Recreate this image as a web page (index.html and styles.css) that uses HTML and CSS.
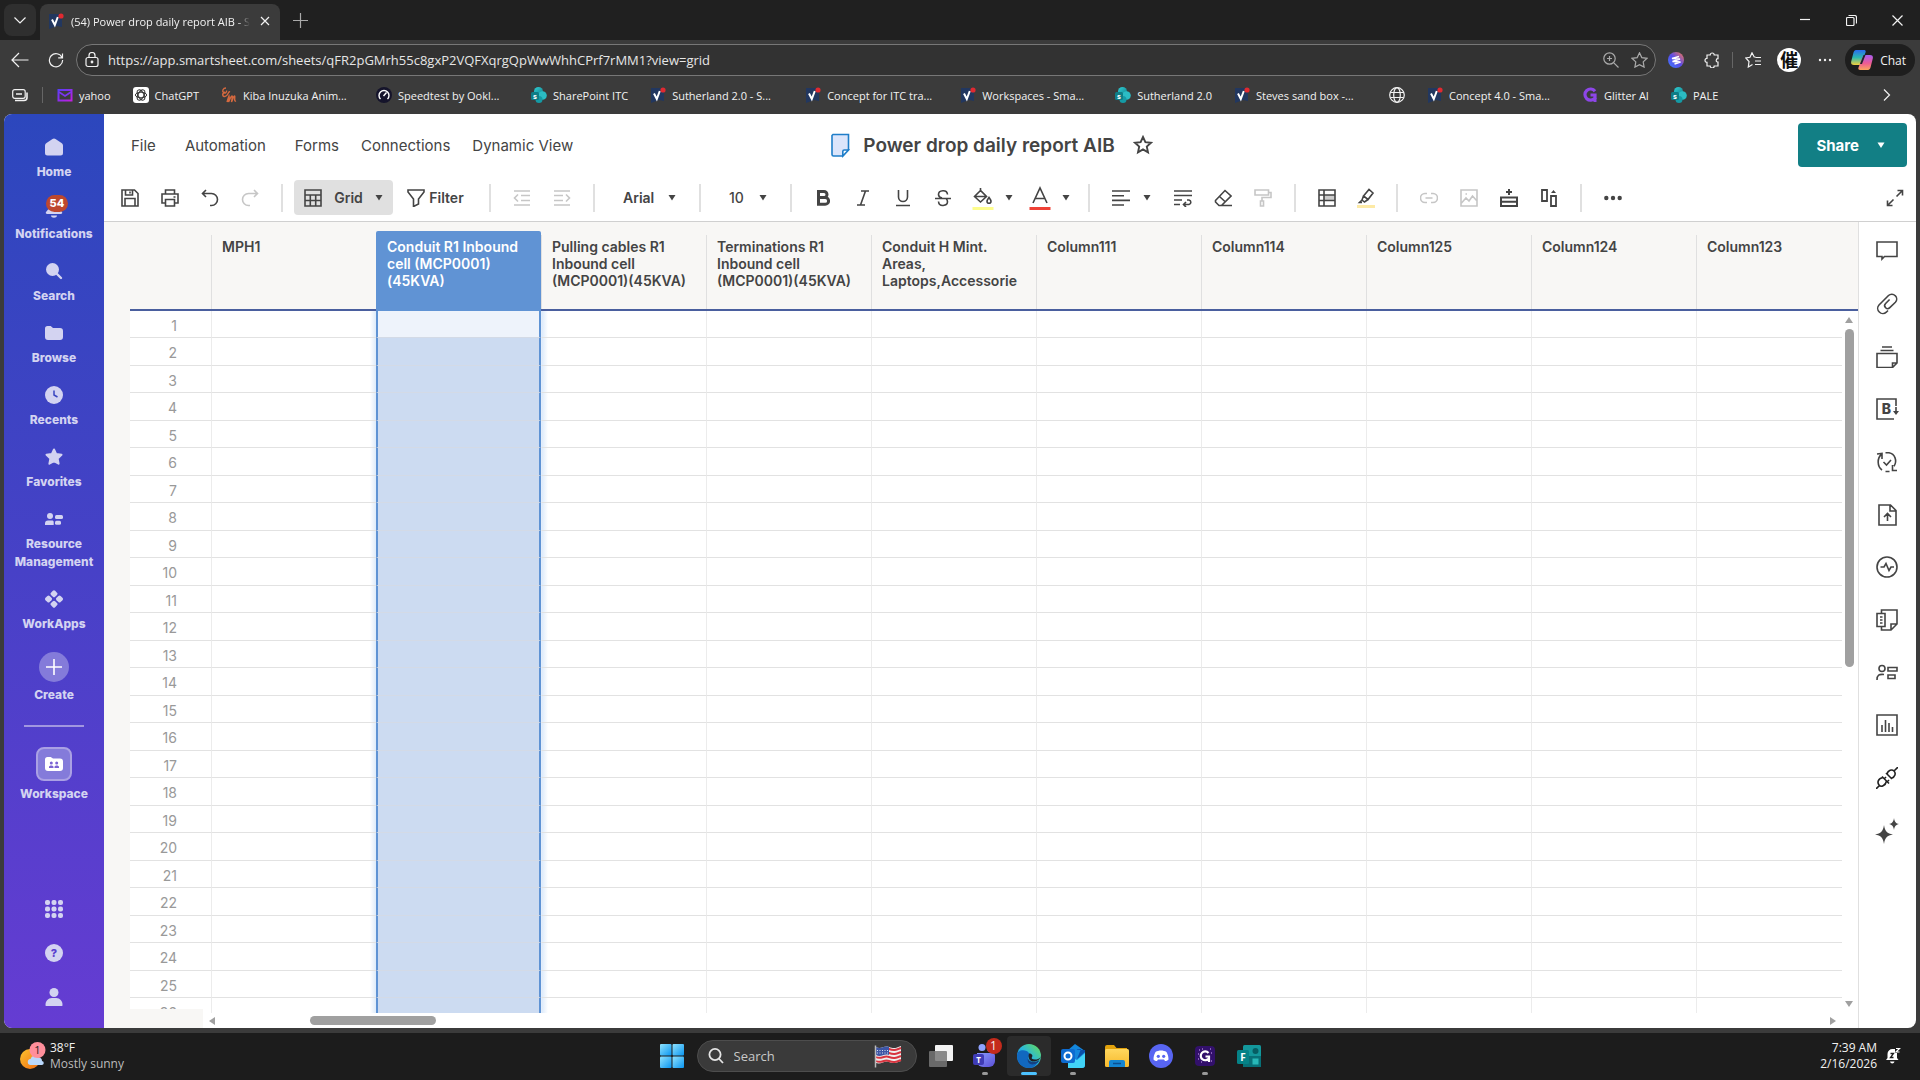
FILE: index.html
```html
<!DOCTYPE html>
<html lang="en">
<head>
  <meta charset="UTF-8">
  <meta name="viewport" content="width=device-width, initial-scale=1.0">
  <title>Power drop daily report AIB</title>
  <link rel="stylesheet" href="styles.css">
</head>
<body>
  <!-- Shared icons -->
  <svg class="defs" width="0" height="0" aria-hidden="true">
    <defs>
      <linearGradient id="g-sp" x1="0" y1="0" x2="1" y2="1"><stop offset="0" stop-color="#2fd0d6"/><stop offset="1" stop-color="#117f8c"/></linearGradient>
      <linearGradient id="g-yahoo" x1="0" y1="0" x2="1" y2="1"><stop offset="0" stop-color="#5a3df5"/><stop offset="1" stop-color="#c01fe0"/></linearGradient>
      <linearGradient id="g-win" x1="0" y1="0" x2="1" y2="1"><stop offset="0" stop-color="#8fe3ff"/><stop offset="1" stop-color="#0a95f0"/></linearGradient>
      <linearGradient id="g-edge" x1="0" y1="1" x2="1" y2="0"><stop offset="0" stop-color="#1273c9"/><stop offset=".5" stop-color="#28b7dd"/><stop offset="1" stop-color="#6be04e"/></linearGradient>
      <linearGradient id="g-cop1" x1="0" y1="0" x2="0" y2="1"><stop offset="0" stop-color="#2a6bf0"/><stop offset=".5" stop-color="#2bb8b0"/><stop offset="1" stop-color="#f5d03c"/></linearGradient>
      <linearGradient id="g-cop2" x1="0" y1="0" x2="0" y2="1"><stop offset="0" stop-color="#a95df2"/><stop offset=".55" stop-color="#ee5a94"/><stop offset="1" stop-color="#fba45c"/></linearGradient>
      <linearGradient id="g-ext" x1="1" y1="0" x2="0" y2="1"><stop offset="0" stop-color="#ff7a4d"/><stop offset=".5" stop-color="#5a4be8"/><stop offset="1" stop-color="#3f7bff"/></linearGradient>
      <linearGradient id="g-sun" x1="0" y1="0" x2="1" y2="1"><stop offset="0" stop-color="#fcc42f"/><stop offset="1" stop-color="#ef6a12"/></linearGradient>
      <linearGradient id="g-teams" x1="0" y1="0" x2="1" y2="1"><stop offset="0" stop-color="#8b9bff"/><stop offset="1" stop-color="#5a4fd6"/></linearGradient>
      <linearGradient id="g-folder" x1="0" y1="0" x2="0" y2="1"><stop offset="0" stop-color="#ffd75e"/><stop offset="1" stop-color="#f7b92c"/></linearGradient>
    </defs>
    <symbol id="i-smart" viewBox="0 0 16 16">
      <path d="M1 1h13v13l-5-1-8 3z" fill="#22375f"/>
      <path d="M4 6.500 6.800 12l3-8" fill="none" stroke="#fff" stroke-width="2"/>
      <circle cx="13" cy="3" r="2.600" fill="#e02a30"/>
    </symbol>
    <symbol id="i-share" viewBox="0 0 16 16">
      <circle cx="7.500" cy="4.500" r="4.500" fill="url(#g-sp)"/>
      <circle cx="11.500" cy="8.500" r="4.300" fill="#2bbcc4"/>
      <circle cx="8" cy="12.500" r="3.500" fill="#159aa5"/>
      <rect y="5" width="8" height="8" rx="1.500" fill="#0f7d86"/>
      <text x="4" y="11.500" font-family="Inter, sans-serif" font-size="7" font-weight="700" fill="#fff" text-anchor="middle">s</text>
    </symbol>
    <symbol id="i-caret" viewBox="0 0 8 6"><path d="M.5 0h7L4 5.600z" fill="currentColor"/></symbol>
  </svg>

  <!-- Browser window -->
  <div class="tab-strip">
    <button class="tab-menu" aria-label="Tab actions"><svg width="14" height="14" viewBox="0 0 14 14" class="line"><path d="M1.500 4.500 7 10l5.500-5.500"/></svg></button>
    <div class="tab">
      <svg width="16" height="16"><use href="#i-smart"/></svg>
      <span class="tab-title">(54) Power drop daily report AIB - S</span>
      <button class="tab-close" aria-label="Close tab"><svg width="10" height="10" viewBox="0 0 10 10" class="line"><path d="M1 1l8 8M9 1 1 9"/></svg></button>
    </div>
    <button class="tab-new" aria-label="New tab"><svg width="15" height="15" viewBox="0 0 15 15" class="line"><path d="M7.500 0v15M0 7.500h15"/></svg></button>
    <div class="window-controls">
      <button aria-label="Minimize"><svg width="10" height="10" viewBox="0 0 10 10" class="line"><path d="M0 4.500h10"/></svg></button>
      <button aria-label="Restore"><svg width="11" height="11" viewBox="0 0 11 11" class="line"><rect x=".5" y="2.500" width="7.500" height="8" rx="1"/><path d="M2.500.5h6a2 2 0 0 1 2 2v6"/></svg></button>
      <button aria-label="Close"><svg width="11" height="11" viewBox="0 0 11 11" class="line"><path d="M.5.5l10 10M10.500.5l-10 10"/></svg></button>
    </div>
  </div>

  <div class="nav-bar">
    <button class="nav-btn" aria-label="Back"><svg width="18" height="16" viewBox="0 0 18 16" class="line"><path d="M17.500 8H1M8 1 1 8l7 7"/></svg></button>
    <button class="nav-btn" aria-label="Refresh"><svg width="16" height="16" viewBox="0 0 16 16" class="line"><path d="M14 5.500A6.600 6.600 0 1 0 14.600 8M14.500 1.500v4.300h-4.300"/></svg></button>
    <div class="address">
      <svg width="14" height="16" viewBox="0 0 14 16" class="line"><rect x="1" y="5.500" width="12" height="9" rx="2"/><path d="M4 5.500V3.500a3 3 0 0 1 6 0v2"/><circle cx="7" cy="10" r=".8" fill="currentColor"/></svg>
      <input type="text" aria-label="Address" value="https://app.smartsheet.com/sheets/qFR2pGMrh55c8gxP2VQFXqrgQpWwWhhCPrf7rMM1?view=grid">
      <button aria-label="Zoom"><svg width="16" height="16" viewBox="0 0 16 16" class="line"><circle cx="6.500" cy="6.500" r="5.700"/><path d="M10.800 10.800 15.500 15.500M6.500 4v5M4 6.500h5"/></svg></button>
      <button aria-label="Add to favorites"><svg width="17" height="16" viewBox="0 0 17 16" class="line"><path d="M8.500.8l2.300 4.800 5.200.7-3.800 3.600.9 5.200-4.600-2.500-4.600 2.500.9-5.200L1 6.300l5.200-.7z"/></svg></button>
    </div>
    <button class="nav-btn" aria-label="Extension"><svg width="16" height="16" viewBox="0 0 16 16"><circle cx="8" cy="8" r="8" fill="url(#g-ext)"/><path d="M11 4.500 4 6.500l8 .5-7.500 2.500 8 .5-6 2" fill="none" stroke="#fff" stroke-width="1.500"/></svg></button>
    <button class="nav-btn" aria-label="Extensions"><svg width="16" height="16" viewBox="0 0 16 16" class="line"><path d="M3 3h3.200a2 2 0 1 1 4 0H14v3.600a1.800 1.800 0 0 0 0 3.600V14h-3.800a2 2 0 1 1-4 0H3v-3.600a2 2 0 1 1 0-4z"/></svg></button>
    <span class="nav-sep"></span>
    <button class="nav-btn" aria-label="Favorites"><svg width="17" height="16" viewBox="0 0 17 16" class="line"><path d="M10.500 5 9.200 5 7 .8 5 5.300.8 6l3.200 3.500-.7 5.500 4.200-2.500M10.500 5.500H16M10 9h6M10 12.500h6"/></svg></button>
    <button class="nav-btn" aria-label="Profile"><span class="avatar">催</span></button>
    <button class="nav-btn" aria-label="Settings"><svg width="14" height="4" viewBox="0 0 14 4" fill="currentColor"><circle cx="2" cy="2" r="1.200"/><circle cx="7" cy="2" r="1.200"/><circle cx="12" cy="2" r="1.200"/></svg></button>
    <button class="chat-btn">
      <svg width="22" height="20" viewBox="0 0 22 20"><path d="M5 0h8c1.500 0 2 1 1.500 2.500L10.500 13c-.5 1.500-1.500 2-3 2H3c-2 0-3.300-1-2.800-3.500L2.500 2.500C3 1 3.700 0 5 0z" fill="url(#g-cop1)"/><path d="M17 20H9c-1.500 0-2-1-1.500-2.500L11.500 7c.5-1.500 1.500-2 3-2H19c2 0 3.300 1 2.800 3.500l-2.300 9C19 19 18.300 20 17 20z" fill="url(#g-cop2)"/><path d="M9 14 12.500 5h2L11 14z" fill="#20242c"/></svg>
      Chat
    </button>
  </div>

  <nav class="bookmarks" aria-label="Bookmarks">
    <button class="bookmark-devices" aria-label="Tab groups"><svg width="16" height="13" viewBox="0 0 16 13" class="line"><rect x=".7" y=".7" width="12.500" height="8.600" rx="2"/><path d="M4 5h6M15 3.500v5a3 3 0 0 1-3 3H3" stroke-width="1.600"/></svg></button>
    <a class="bookmark" href="#"><svg width="16" height="16" viewBox="0 0 16 16"><rect x="1.500" y="3" width="13" height="10.500" fill="none" stroke="url(#g-yahoo)" stroke-width="2"/><path d="M2 5l6 4 6-4" fill="none" stroke="#7a35f0" stroke-width="1.800"/></svg><span>yahoo</span></a>
    <a class="bookmark" href="#"><svg width="16" height="16" viewBox="0 0 16 16"><rect width="16" height="16" rx="3" fill="#fff"/><g fill="none" stroke="#333"><ellipse cx="8" cy="8" rx="5.600" ry="2.800"/><ellipse cx="8" cy="8" rx="5.600" ry="2.800" transform="rotate(60 8 8)"/><ellipse cx="8" cy="8" rx="5.600" ry="2.800" transform="rotate(120 8 8)"/></g></svg><span>ChatGPT</span></a>
    <a class="bookmark bookmark-long" href="#"><svg width="16" height="16" viewBox="0 0 16 16" fill="none" stroke="#d5693f" stroke-width="1.400"><path d="M5 1C2 1 .8 4 2.500 5.500S6 5 5.500 3.500M4 5c-4 2-2 6 1 4s2-5 4-4M6 15c1-3 1.500-5 2-6 .5 2-.5 4-.5 6 1.500-3 2.500-6 3.500-6s-.5 4-.5 6c1.500-3 2-6 3-6s-1 6 1.500 5"/></svg><span>Kiba Inuzuka Anim...</span></a>
    <a class="bookmark bookmark-long" href="#"><svg width="16" height="16" viewBox="0 0 16 16"><circle cx="8" cy="8" r="8" fill="#15142b"/><path d="M4.500 12A5 5 0 1 1 11.500 12M7.500 9l3-3.500" fill="none" stroke="#fff" stroke-width="1.400"/></svg><span>Speedtest by Ookl...</span></a>
    <a class="bookmark" href="#"><svg width="16" height="16"><use href="#i-share"/></svg><span>SharePoint ITC</span></a>
    <a class="bookmark bookmark-long" href="#"><svg width="16" height="16"><use href="#i-smart"/></svg><span>Sutherland 2.0 - S...</span></a>
    <a class="bookmark bookmark-long" href="#"><svg width="16" height="16"><use href="#i-smart"/></svg><span>Concept for ITC tra...</span></a>
    <a class="bookmark bookmark-long" href="#"><svg width="16" height="16"><use href="#i-smart"/></svg><span>Workspaces - Sma...</span></a>
    <a class="bookmark" href="#"><svg width="16" height="16"><use href="#i-share"/></svg><span>Sutherland 2.0</span></a>
    <a class="bookmark bookmark-long" href="#"><svg width="16" height="16"><use href="#i-smart"/></svg><span>Steves sand box -...</span></a>
    <a class="bookmark" href="#" aria-label="Site"><svg width="16" height="16" viewBox="0 0 16 16" class="line"><circle cx="8" cy="8" r="7.300"/><ellipse cx="8" cy="8" rx="3.300" ry="7.300"/><path d="M1.500 5.500h13M1.500 10.500h13"/></svg></a>
    <a class="bookmark bookmark-long" href="#"><svg width="16" height="16"><use href="#i-smart"/></svg><span>Concept 4.0 - Sma...</span></a>
    <a class="bookmark" href="#"><svg width="16" height="16" viewBox="0 0 16 16"><path d="M13 4.200A5.600 5.600 0 1 0 13 11V8H8.500" fill="none" stroke="#8d46e8" stroke-width="3.200"/><path d="M13 11v4" stroke="#8d46e8" stroke-width="3"/></svg><span>Glitter AI</span></a>
    <a class="bookmark" href="#"><svg width="16" height="16"><use href="#i-share"/></svg><span>PALE</span></a>
    <button class="bookmark-more" aria-label="More bookmarks"><svg width="8" height="12" viewBox="0 0 8 12" class="line"><path d="M1 .5 6.500 6 1 11.500"/></svg></button>
  </nav>

  <div class="app">
    <!-- Left navigation -->
    <nav class="sidebar">
      <a class="side-item" href="#"><svg width="18" height="18" viewBox="0 0 18 18" fill="currentColor"><path d="M7.500 1 1.500 5A3 3 0 0 0 0 7.500V15a2.500 2.500 0 0 0 2.500 2.500h13A2.500 2.500 0 0 0 18 15V7.500A3 3 0 0 0 16.500 5l-6-4a3 3 0 0 0-3 0z"/></svg>Home</a>
      <a class="side-item" href="#"><svg width="18" height="18" viewBox="0 0 18 18" fill="currentColor"><path d="M9 0a5.500 5.500 0 0 0-5.500 5.500v3.500L1 12c-.6 1 0 2 1 2h14c1 0 1.600-1 1-2l-2.500-3V5.500A5.500 5.500 0 0 0 9 0zM6 15.500h6c0 3-6 3-6 0z"/></svg><span class="badge">54</span>Notifications</a>
      <a class="side-item" href="#"><svg width="18" height="18" viewBox="0 0 18 18" fill="currentColor"><circle cx="7.500" cy="7.500" r="6.500"/><path d="M12 12l4 4" stroke="currentColor" stroke-width="2.400" stroke-linecap="round"/></svg>Search</a>
      <a class="side-item" href="#"><svg width="18" height="18" viewBox="0 0 18 18" fill="currentColor"><path d="M0 4.500A2.500 2.500 0 0 1 2.500 2h3.200L8 4h7a3 3 0 0 1 3 3v6a3 3 0 0 1-3 3H3a3 3 0 0 1-3-3z"/></svg>Browse</a>
      <a class="side-item" href="#"><svg width="18" height="18" viewBox="0 0 18 18"><circle cx="9" cy="9" r="9" fill="currentColor"/><path d="M9 4.500V9l3.500 2" fill="none" stroke="#3a45c0" stroke-width="1.500"/></svg>Recents</a>
      <a class="side-item" href="#"><svg width="18" height="18" viewBox="0 0 18 18"><path d="M9 1.500l2.200 4.600 5.300.7-3.900 3.600 1 5.300L9 13.200l-4.600 2.500 1-5.300L1.500 6.800l5.300-.7z" fill="currentColor" stroke="currentColor" stroke-width="2" stroke-linejoin="round"/></svg>Favorites</a>
      <a class="side-item" href="#"><svg width="18" height="18" viewBox="0 0 18 18" fill="currentColor"><circle cx="5" cy="6" r="3"/><path d="M0 15v-1.500A3 3 0 0 1 3 10.500h4c1 0 1.700.5 1.700 1.500v3z"/><rect x="10" y="5" width="8" height="4" rx="1.500"/><rect x="10" y="10.700" width="6" height="4" rx="1.500"/></svg>Resource Management</a>
      <a class="side-item" href="#"><svg width="18" height="18" viewBox="0 0 18 18" fill="currentColor"><rect x="-2.900" y="-2.900" width="5.800" height="5.800" rx="1.600" transform="translate(9 3.800) rotate(45)"/><rect x="-2.900" y="-2.900" width="5.800" height="5.800" rx="1.600" transform="translate(3.500 9) rotate(45)"/><rect x="-2.900" y="-2.900" width="5.800" height="5.800" rx="1.600" transform="translate(14.500 9) rotate(45)"/><rect x="-2.900" y="-2.900" width="5.800" height="5.800" rx="1.600" transform="translate(9 14.200) rotate(45)"/></svg>WorkApps</a>
      <button class="side-item side-item-tight"><span class="create-icon"><svg width="16" height="16" viewBox="0 0 16 16"><path d="M8 0v16M0 8h16" stroke="#fff" stroke-width="1.600"/></svg></span>Create</button>
      <hr class="side-divider">
      <a class="side-item side-item-tight" href="#"><span class="workspace-icon"><svg width="18" height="18" viewBox="0 0 18 18"><path d="M0 4.500A2.500 2.500 0 0 1 2.500 2h3.200L8 3.500h7a3 3 0 0 1 3 3V13a3 3 0 0 1-3 3H3a3 3 0 0 1-3-3z" fill="#fff"/><g fill="#7a62d3"><circle cx="6.300" cy="8" r="1.500"/><circle cx="11.700" cy="8" r="1.500"/><path d="M4 13v-1c0-2 4.500-2 4.500 0v1zM9.500 13v-1c0-2 4.500-2 4.500 0v1z"/></g></svg></span>Workspace</a>
      <div class="side-bottom">
        <button aria-label="Apps"><svg width="18" height="18" viewBox="0 0 18 18" fill="currentColor"><rect width="5" height="5" rx="2"/><rect x="6.500" width="5" height="5" rx="2"/><rect x="13" width="5" height="5" rx="2"/><rect y="6.500" width="5" height="5" rx="2"/><rect x="6.500" y="6.500" width="5" height="5" rx="2"/><rect x="13" y="6.500" width="5" height="5" rx="2"/><rect y="13" width="5" height="5" rx="2"/><rect x="6.500" y="13" width="5" height="5" rx="2"/><rect x="13" y="13" width="5" height="5" rx="2"/></svg></button>
        <button aria-label="Help"><span class="help-icon">?</span></button>
        <button aria-label="Account"><svg width="18" height="18" viewBox="0 0 18 18" fill="currentColor"><circle cx="9" cy="4.500" r="4.500"/><path d="M.7 18c-1-4 2-8 6-8h4.600c4 0 7 4 6 8z"/></svg></button>
      </div>
    </nav>

    <div class="sheet">
      <header class="sheet-header">
        <div class="menu">
          <button class="menu-wide">File</button>
          <button class="menu-wide">Automation</button>
          <button>Forms</button>
          <button>Connections</button>
          <button>Dynamic View</button>
        </div>
        <div class="sheet-title">
          <svg width="19" height="25" viewBox="0 0 19 25"><path d="M2 1.500h15.500v15.300l-5.700 6.200H2.500a1.500 1.500 0 0 1-1.500-1.500v-19z" fill="#dbe5fb" stroke="#1f7ec9" stroke-width="1.600"/><path d="M17.500 17l-5.700 6v-4.500c0-1 .5-1.500 1.500-1.500z" fill="#fff" stroke="#1f7ec9" stroke-width="1.600"/></svg>
          <h1>Power drop daily report AIB</h1>
          <button aria-label="Favorite"><svg width="20" height="20" viewBox="0 0 20 20"><path d="M10 2l2.400 5.200 5.600.6-4.200 3.800 1.200 5.700-5-2.900-5 2.900 1.200-5.700L2 7.800l5.600-.6z" fill="none" stroke="#444" stroke-width="1.900"/></svg></button>
        </div>
        <button class="share">Share <svg width="8" height="7"><use href="#i-caret"/></svg></button>
      </header>

      <div class="toolbar">
        <button class="tool" aria-label="Save"><svg width="18" height="18" viewBox="0 0 18 18"><path d="M1 1h12.500L17 4.500V17H1zM4.500 1v5h7V1M4 17V9.500h10V17M9 2.500v2"/></svg></button>
        <button class="tool" aria-label="Print"><svg width="18" height="18" viewBox="0 0 18 18"><path d="M4.500 5V1h9v4M4.500 14H1V5h16v9h-3.500M4.500 10.500h9V17h-9zM12.500 8h2"/></svg></button>
        <button class="tool" aria-label="Undo"><svg width="18" height="18" viewBox="0 0 18 18"><path d="M5 1 1.500 4.500 5 8M2 4.500h8.500a6 6 0 0 1 0 12H9"/></svg></button>
        <button class="tool" aria-label="Redo" disabled><svg width="18" height="18" viewBox="0 0 18 18"><path d="M13 1l3.500 3.500L13 8M16 4.500H7.500a6 6 0 0 0 0 12H9"/></svg></button>
        <span class="tool-sep"></span>
        <button class="view-btn"><svg width="18" height="18" viewBox="0 0 18 18"><path d="M1 1h16v16H1zM1 6h16M1 11.500h16M6.300 6v11M11.700 6v11"/></svg>Grid<svg class="caret" width="8" height="6"><use href="#i-caret"/></svg></button>
        <button class="filter-btn"><svg width="18" height="18" viewBox="0 0 18 18"><path d="M1 1h16v2l-5.500 7v5l-5 2.500V10L1 3z"/></svg>Filter</button>
        <span class="tool-sep"></span>
        <button class="tool" aria-label="Outdent" disabled><svg width="18" height="18" viewBox="0 0 18 18"><path d="M1 2h16M8 6.500h9M8 11.500h9M1 16h16M5 5.500 1.500 9 5 12.500"/></svg></button>
        <button class="tool" aria-label="Indent" disabled><svg width="18" height="18" viewBox="0 0 18 18"><path d="M1 2h16M1 6.500h9M1 11.500h9M1 16h16M13 5.500 16.500 9 13 12.500"/></svg></button>
        <span class="tool-sep"></span>
        <div class="pick pick-font"><select aria-label="Font"><option>Arial</option></select><svg class="caret" width="8" height="6"><use href="#i-caret"/></svg></div>
        <span class="tool-sep"></span>
        <div class="pick pick-size"><select aria-label="Font size"><option>10</option></select><svg class="caret" width="8" height="6"><use href="#i-caret"/></svg></div>
        <span class="tool-sep"></span>
        <button class="tool" aria-label="Bold"><svg width="18" height="18" viewBox="0 0 18 18"><path d="M4.500 2.500H10a3 3 0 0 1 0 6H4.500zM4.500 8.500h6.700a3.400 3.400 0 0 1 0 6.800H4.500z" stroke-width="3"/></svg></button>
        <button class="tool" aria-label="Italic"><svg width="18" height="18" viewBox="0 0 18 18"><path d="M7 2h8M3 16h8M11.500 2l-5 14"/></svg></button>
        <button class="tool" aria-label="Underline"><svg width="18" height="18" viewBox="0 0 18 18"><path d="M4.500 1v7a4.500 4.500 0 0 0 9 0V1M2 16.500h14"/></svg></button>
        <button class="tool" aria-label="Strikethrough"><svg width="18" height="18" viewBox="0 0 18 18"><path d="M13.500 5.500C13 0 4.500 1 4.500 5.500c0 2 1.500 3 3.500 3.500M1 9.500h16M4.500 12.500C5 18.500 13.500 17 13.500 12.800c0-1.500-.5-2.500-1.500-3.300"/></svg></button>
        <button class="tool" aria-label="Fill color"><svg width="22" height="24" viewBox="0 0 22 24"><path d="M8.500 2v4M8.500 4.500 2.500 10.500l6 5.500 6-5.500zM3 10.500h11M17 11.500c1.200 1.700 2 2.700 2 3.700a2 2 0 0 1-4 0c0-1 .8-2 2-3.700z"/><path d="M.5 22.500h21" stroke="#fdfd8c" stroke-width="3"/></svg></button>
        <button class="caret-btn" aria-label="Fill colors"><svg class="caret" width="8" height="6"><use href="#i-caret"/></svg></button>
        <button class="tool" aria-label="Text color"><svg width="22" height="24" viewBox="0 0 22 24"><path d="M4 17 11 2l7 15M6 12.500h10"/><path d="M.5 22.500h21" stroke="#ef4136" stroke-width="3"/></svg></button>
        <button class="caret-btn" aria-label="Text colors"><svg class="caret" width="8" height="6"><use href="#i-caret"/></svg></button>
        <span class="tool-sep"></span>
        <button class="tool" aria-label="Align"><svg width="18" height="18" viewBox="0 0 18 18"><path d="M0 2h18M0 6.700h12M0 11.400h18M0 16h12"/></svg></button>
        <button class="caret-btn caret-btn-wide" aria-label="Alignments"><svg class="caret" width="8" height="6"><use href="#i-caret"/></svg></button>
        <button class="tool" aria-label="Wrap"><svg width="18" height="18" viewBox="0 0 18 18"><path d="M0 2h18M0 6.500h18M0 11h8M0 15.500h6M13 11h2a2.300 2.300 0 0 1 0 4.500H9.500M12 13l-2.500 2.500L12 18"/></svg></button>
        <button class="tool" aria-label="Clear format"><svg width="18" height="18" viewBox="0 0 18 18"><path d="M1.500 11.500 11 1.500l6 5.500-9.500 9.500H5l-3.500-3.500zM5.500 7.500l6 5.500M7 16.500h11"/></svg></button>
        <button class="tool" aria-label="Format painter" disabled><svg width="18" height="18" viewBox="0 0 18 18"><path d="M1 1h13.500v5H1zM14.500 3.500H17v5H8V12M6.500 12h3v5h-3z"/></svg></button>
        <span class="tool-sep"></span>
        <div class="tool-group">
          <button class="tool" aria-label="Conditional formatting"><svg width="18" height="18" viewBox="0 0 18 18"><path d="M6 6h11v5H6z" fill="#ccc" stroke="none"/><path d="M1 1h16v16H1zM6 1v16M1 6h16M1 11.500h16"/></svg></button>
          <button class="tool" aria-label="Highlight changes"><svg width="18" height="20" viewBox="0 0 18 20"><path d="M6.500 8 12 1.500l4 3.500-5 6.500zM6.500 8 5 12l2.500 2 3.500-2.500M5 12l-2.500 2.500H5"/><path d="M0 18.500h18" stroke="#fdeaa6" stroke-width="3"/></svg></button>
        </div>
        <span class="tool-sep"></span>
        <button class="tool" aria-label="Link" disabled><svg width="18" height="18" viewBox="0 0 18 18"><path d="M7 4.500H5a4.500 4.500 0 0 0 0 9h2M11 4.500h2a4.500 4.500 0 0 1 0 9h-2M5.500 9h7"/></svg></button>
        <button class="tool" aria-label="Image" disabled><svg width="18" height="18" viewBox="0 0 18 18"><path d="M1 1h16v16H1zM1.500 14 6 9l3 3 3.500-5 4.500 5M5.500 5h1.500"/></svg></button>
        <button class="tool" aria-label="Insert row"><svg width="18" height="18" viewBox="0 0 18 18"><path d="M9 0v6M6 3h6M1 8.500h16V17H1zM1 12.700h16" stroke-width="2"/></svg></button>
        <button class="tool" aria-label="Move column"><svg width="18" height="18" viewBox="0 0 18 18"><path d="M2 1h5v11H2zM11 7h5v10h-5z" stroke-width="1.800"/><path d="M11 4l2.500-3L16 4z" fill="#444" stroke="none"/></svg></button>
        <span class="tool-sep"></span>
        <button class="tool" aria-label="More"><svg width="18" height="6" viewBox="0 0 18 6"><g fill="#444" stroke="none"><circle cx="2.300" cy="3" r="2.200"/><circle cx="9" cy="3" r="2.200"/><circle cx="15.700" cy="3" r="2.200"/></g></svg></button>
        <button class="tool tool-expand" aria-label="Full screen"><svg width="18" height="18" viewBox="0 0 18 18"><path d="M10.500 7.500 16.500 1.500M11.500 1.500h5v5M7.500 10.500l-6 6M1.500 11.500v5h5"/></svg></button>
      </div>

      <div class="workarea">
        <div class="grid-pane">
          <div class="grid-scroll">
            <table class="grid">
              <thead>
                <tr>
                  <th class="row-num" aria-label="Row"></th>
                  <th>MPH1</th>
                  <th class="selected">Conduit R1 Inbound cell (MCP0001)(45KVA)</th>
                  <th>Pulling cables R1 Inbound cell (MCP0001)(45KVA)</th>
                  <th>Terminations R1 Inbound cell (MCP0001)(45KVA)</th>
                  <th>Conduit H Mint. Areas, Laptops,Accessorie</th>
                  <th>Column111</th>
                  <th>Column114</th>
                  <th>Column125</th>
                  <th>Column124</th>
                  <th class="last">Column123</th>
                </tr>
              </thead>
              <tbody id="grid-body"></tbody>
            </table>
            <div class="v-scroll">
              <i class="arrow-up"></i>
              <span class="v-thumb"></span>
              <i class="arrow-down"></i>
            </div>
          </div>
          <div class="h-scroll">
            <span class="corner"></span>
            <i class="arrow-left"></i>
            <span class="h-thumb"></span>
            <i class="arrow-right"></i>
          </div>
        </div>

        <aside class="rail">
          <div class="rail-list">
            <button aria-label="Conversations"><svg width="22" height="22" viewBox="0 0 22 22"><path d="M1 2h20v14.500H8.500L6 19v-2.500H1z"/></svg></button>
            <button aria-label="Attachments"><svg width="22" height="22" viewBox="0 0 22 22"><path d="M12 17.500l-1.700 1.700a5 5 0 0 1-7-.2 5 5 0 0 1-.3-7L12.500 2.500a4.700 4.700 0 0 1 6.700.2 4.700 4.700 0 0 1 .2 6.600l-5.600 5.400a2.900 2.900 0 0 1-4.200-4.200l4-4"/></svg></button>
            <button aria-label="Proofs"><svg width="22" height="22" viewBox="0 0 22 22"><path d="M6 1h10M4.500 4.500h13M1 7.500h20V17l-4.500 4.500H1zM16.500 21.500V17H21"/></svg></button>
            <button aria-label="Brandfolder"><svg width="24" height="22" viewBox="-1 0 24 22"><path d="M20 8V1H1v20h17M20 9v6"/><path d="M17 13h6l-3 4z" fill="#444" stroke="none"/><text x="10.500" y="16" text-anchor="middle" font-size="14" font-weight="800" class="glyph">B</text></svg></button>
            <button aria-label="Update requests"><svg width="22" height="22" viewBox="0 0 22 22"><path d="M1 3l5-.5V8M5.500 3.500C1 7 1 15.500 6 19M9.500 20.500h4M9.500 1.800h3.500c6 1 8.500 8 5 13.500M21 19.500h-4.500V14M7.500 11l3 3 4.500-5"/></svg></button>
            <button aria-label="Publish"><svg width="22" height="22" viewBox="0 0 22 22"><path d="M3 1h11.500L20 6.500V21H3zM14 1v6h6M11.500 17v-7M8 13l3.500-3.500L15 13"/></svg></button>
            <button aria-label="Activity log"><svg width="22" height="22" viewBox="0 0 22 22"><circle cx="11" cy="11" r="10"/><path d="M4.500 11H8l2-3.500 3 7 2-3.500h3"/></svg></button>
            <button aria-label="Summary"><svg width="22" height="22" viewBox="0 0 22 22"><path d="M5.500 4V1H21v14l-6 6H5.500v-3M21 15h-6v6M1 4.500h8v13H1zM4 8h2.500M4 11h2.500M4 14h2.500"/></svg></button>
            <button aria-label="Resources"><svg width="22" height="22" viewBox="0 0 22 22"><circle cx="6" cy="6.500" r="3"/><path d="M1 18c0-5 2-6 7-5.500M12 5.500h9V9h-9zM12 13h7v3.500h-7z"/></svg></button>
            <button aria-label="Charts"><svg width="22" height="22" viewBox="0 0 22 22"><path d="M1 1h20v20H1zM6 11v7M9.500 6v12M13 9v9M16.500 13v5"/></svg></button>
            <button aria-label="Connectors"><svg width="22" height="22" viewBox="0 0 22 22"><path d="M0 22l3.500-3.500M18.500 3.500 22 0M10 6l6 6M11 7c1-4 5-5 7-3s1.500 6-3 7.500M6 9.500l7 7M7 10.500c-5 1-6 5-4 7.500s6.500 1 7.500-4M10 10l-2 2M13 13l-2 2" stroke="#222"/></svg></button>
            <button aria-label="AI tools"><svg width="24" height="26" viewBox="0 0 24 26"><path d="M9 7c1 6.500 3 8.500 9 9.500-6 1-8 3-9 9.500-1-6.500-3-8.500-9-9.500C6 15.500 8 13.500 9 7zM19 0c.6 4 2 5.500 5 6-3 .7-4.400 2-5 6-.6-4-2-5.300-5-6 3-.5 4.400-2 5-6z" fill="#444" stroke="none"/></svg></button>
          </div>
        </aside>
      </div>
    </div>
  </div>

  <!-- Taskbar -->
  <footer class="taskbar">
    <button class="weather">
      <svg width="26" height="28" viewBox="0 0 26 28"><circle cx="10" cy="17" r="10" fill="url(#g-sun)"/><path d="M11 23a3 3 0 0 1-.5-6 4.500 4.500 0 0 1 8-1.500 3.500 3.500 0 0 1 3.500 3.500 2 2 0 0 1-.5 4z" fill="#b9d8fb"/><circle cx="17.500" cy="8" r="8" fill="#ff8f9b"/><text x="17.500" y="12" text-anchor="middle" font-size="11" fill="#222">1</text></svg>
      <span>38°F<br><small>Mostly sunny</small></span>
    </button>
    <div class="task-center">
      <button class="task" aria-label="Start"><svg width="24" height="24" viewBox="0 0 24 24" fill="url(#g-win)"><rect width="11.500" height="11.500" rx="1"/><rect x="12.500" width="11.500" height="11.500" rx="1"/><rect y="12.500" width="11.500" height="11.500" rx="1"/><rect x="12.500" y="12.500" width="11.500" height="11.500" rx="1"/></svg></button>
      <label class="task-search">
        <svg width="16" height="16" viewBox="0 0 16 16" fill="none" stroke="#e4e4e4" stroke-width="1.800"><circle cx="7" cy="6.500" r="5.600"/><path d="M10.800 10.500 15 15"/></svg>
        <input type="text" placeholder="Search" aria-label="Search">
        <svg width="28" height="24" viewBox="0 0 28 24"><path d="M2 3c5 3 8-2 13 0s7 1 12-1v15c-5 2-8 3-12 1s-8 3-13 1z" fill="#eee"/><path d="M2 5c5 3 8-2 13 0s7 1 12-1M2 9c5 3 8-2 13 0s7 1 12-1M2 13c5 3 8-2 13 0s7 1 12-1M2 17c5 3 8-2 13 0s7 1 12-1" fill="none" stroke="#d8343f" stroke-width="2"/><path d="M2 3c5 3 8-2 13 0v8c-5-2-8 3-13 0z" fill="#3d55a5"/><path d="M3 6.500h11M3 9h11" stroke="#fff" stroke-width=".8" stroke-dasharray="1 1.500"/><path d="M1.500 1.500v22" stroke="#bbb" stroke-width="1.500"/></svg>
      </label>
      <button class="task" aria-label="Task view"><svg width="24" height="24" viewBox="0 0 24 24"><rect x="6" y="1" width="18" height="16" rx="1" fill="#f3f3f3"/><rect y="7" width="18" height="16" rx="1" fill="#777" fill-opacity=".85"/></svg></button>
      <button class="task running" aria-label="Teams"><svg width="24" height="24" viewBox="0 0 24 24"><circle cx="9" cy="3.500" r="3.500" fill="#8fa2ff"/><circle cx="17" cy="5" r="3" fill="#6f6ae6"/><path d="M4 9h15a3 3 0 0 1 3 3v5a6 6 0 0 1-6 6H10a6 6 0 0 1-6-6z" fill="url(#g-teams)"/><rect x="0" y="10" width="11" height="11" rx="2" fill="#3f3bb5"/><text x="5.500" y="18.500" text-anchor="middle" font-size="8" font-weight="700" fill="#fff">T</text></svg><span class="task-badge">1</span></button>
      <button class="task active" aria-label="Edge"><svg width="24" height="24" viewBox="0 0 24 24"><circle cx="12" cy="12" r="12" fill="url(#g-edge)"/><path d="M0 12C0 6 6 5.500 9.500 7c3 1.500 3.500 4 2 6-1 2 1 5 5 5 2 0 4-.5 5.500-1.500C19.500 21.500 16 24 12 24 5 24 0 19 0 12z" fill="#1168bf"/><path d="M11 14c-1.500 5 3 8.500 9 5 1-.6 2-1.800 2.500-3-2 1.300-4 2-6 2-3.500 0-5.500-2-5.500-4z" fill="#15417f"/><path d="M12 9.500c3 0 4 2 3 3.500s0 2.500 3 2.500c5 0 6-2.500 6-5 0 3.500-1.500 6-6.500 7-4 .5-7-2.500-5.500-8z" fill="#202124"/></svg></button>
      <button class="task running" aria-label="Outlook"><svg width="24" height="24" viewBox="0 0 24 24"><path d="M7 6 14 0l10 7v14a3 3 0 0 1-3 3H7z" fill="#1386dc"/><path d="M7 12l9 4 8-7v12a3 3 0 0 1-3 3H7z" fill="#41d3f7"/><path d="M15 5h5l-4 10 8-7V6z" fill="#0b4fa8"/><rect y="5" width="14" height="14" rx="2" fill="#0d6bd0"/><circle cx="7" cy="12" r="3.500" fill="none" stroke="#fff" stroke-width="2"/></svg></button>
      <button class="task" aria-label="File Explorer"><svg width="24" height="24" viewBox="0 0 24 24"><path d="M0 3a2 2 0 0 1 2-2h7l2.500 3H22v6H0z" fill="#e2a20c"/><rect y="5" width="24" height="18" rx="1.500" fill="url(#g-folder)"/><path d="M4 23v-5a2 2 0 0 1 2-2h12a2 2 0 0 1 2 2v5z" fill="#1485d1"/><path d="M8 19.500h8" stroke="#0b4f90" stroke-width="1.500"/></svg></button>
      <button class="task" aria-label="Discord"><svg width="24" height="24" viewBox="0 0 24 24"><circle cx="12" cy="12" r="12" fill="#5865f2"/><path d="M6.500 8c3-2 8-2 11 0 1.500 2.500 2 5 2 7.500-1 1-2.200 1.500-3.500 1.500l-1-1.500h-6L8 17c-1.300 0-2.500-.5-3.500-1.500 0-2.500.5-5 2-7.500z" fill="#fff"/><circle cx="9.300" cy="12.300" r="1.600" fill="#5865f2"/><circle cx="14.700" cy="12.300" r="1.600" fill="#5865f2"/></svg></button>
      <button class="task running" aria-label="Glitter AI"><svg width="20" height="20" viewBox="0 0 20 20"><rect width="20" height="20" rx="4" fill="#32106b"/><path d="M4 4h1M7 3h1M15 3h1M3 8h1M16 7h1M3 13h1M16 15h1M6 16h1" stroke="#d9a8ff"/><path d="M13.500 7A4.400 4.400 0 1 0 14 12v-1.500h-3.500M14 12v4" fill="none" stroke="#fff" stroke-width="2.200"/></svg></button>
      <button class="task" aria-label="Forms"><svg width="24" height="24" viewBox="0 0 24 24"><rect x="6" y="1" width="18" height="22" rx="1.500" fill="#13979b"/><path d="M6 12h18v11H6z" fill="#087077"/><circle cx="18.500" cy="7" r="3" fill="#075d63"/><rect x="15.500" y="14.500" width="6" height="6" fill="#28b9b8"/><rect y="6" width="12" height="14" rx="1.500" fill="#058287"/><text x="6" y="16.500" text-anchor="middle" font-size="10" font-weight="700" fill="#fff">F</text></svg></button>
    </div>
    <div class="tray">
      <time>7:39 AM<br>2/16/2026</time>
      <button aria-label="Notifications"><svg width="16" height="18" viewBox="0 0 16 18"><path d="M1 13 2.500 11V7a5 5 0 0 1 5-5H10v4h2v5l1.500 2zM5 14.500h4.500c-.5 2.500-4 2.500-4.500 0z" fill="#fff"/><path d="M5.500 6.500h3L5.500 10.500h3" fill="none" stroke="#1c1c1c" stroke-width="1.300"/><path d="M11 1.500h3.500L11 5h3.500" fill="none" stroke="#fff" stroke-width="1.200"/></svg></button>
    </div>
  </footer>

  <script>
    // Fill the sheet with empty rows
    const columnCount = 10;
    const selectedColumn = 1;
    const gridBody = document.getElementById('grid-body');

    for (let i = 1; i <= 26; i++) {
      const row = document.createElement('tr');
      let cells = `<td class="row-num">${i}</td>`;
      for (let c = 0; c < columnCount; c++) {
        let name = '';
        if (c === selectedColumn) name = 'selected';
        if (c === selectedColumn - 1) name = 'before-selected';
        if (c === selectedColumn + 1) name = 'after-selected';
        cells += `<td class="${name}"></td>`;
      }
      row.innerHTML = cells;
      gridBody.appendChild(row);
    }
  </script>
</body>
</html>
```
FILE: styles.css
```css
* {
  box-sizing: border-box;
}

body {
  margin: 0;
  height: 100vh;
  display: flex;
  flex-direction: column;
  overflow: hidden;
  background: #3b3b3b;
  color: #444;
  font-family: Inter, "Liberation Sans", sans-serif;
}

button, input, select {
  margin: 0;
  padding: 0;
  border: none;
  background: none;
  color: inherit;
  font: inherit;
}

button {
  display: flex;
  align-items: center;
  justify-content: center;
  flex-shrink: 0;
}

a {
  color: inherit;
  text-decoration: none;
}

svg {
  flex-shrink: 0;
}

.defs {
  position: absolute;
}

.line {
  fill: none;
  stroke: currentColor;
  stroke-width: 1.2;
}

/* Browser */
.tab-strip, .nav-bar, .bookmarks, .taskbar {
  display: flex;
  align-items: center;
  flex-shrink: 0;
  color: #f2f2f2;
  font-family: "Open Sans", "Noto Sans", sans-serif;
  font-size: 12px;
}

.tab-strip {
  height: 40px;
  padding-left: 4px;
  background: #202020;
}

.tab-menu {
  width: 32px;
  height: 32px;
  margin-right: 4px;
  border-radius: 8px;
  background: #2f2f2f;
}

.tab {
  display: flex;
  align-items: center;
  align-self: flex-end;
  width: 240px;
  height: 36px;
  padding: 0 8px 2px;
  gap: 7px;
  border-radius: 8px 8px 0 0;
  background: #3b3b3b;
}

.tab-title {
  flex: 1;
  white-space: nowrap;
  font-size: 11px;
  mask-image: linear-gradient(to right, #000 93%, transparent);
}

.tab-close {
  width: 16px;
  height: 16px;
}

.tab-new {
  width: 40px;
  color: #aaa;
}

.window-controls {
  display: flex;
  margin-left: auto;
}

.window-controls button {
  width: 46px;
  height: 40px;
}

.nav-bar {
  height: 40px;
  padding: 0 5px 0 2px;
}

.nav-btn {
  width: 36px;
  height: 32px;
}

.address {
  flex: 1;
  display: flex;
  align-items: center;
  height: 32px;
  margin: 0 2px;
  padding: 0 2px 0 8px;
  border: 1px solid #777;
  border-radius: 16px;
  background: #323232;
}

.address input {
  flex: 1;
  margin-left: 9px;
  font-size: 13px;
  color: #e6e6e6;
}

.address button {
  width: 28px;
  color: #aaa;
}

.nav-sep {
  width: 1px;
  height: 16px;
  margin: 0 2px;
  background: #666;
}

.avatar {
  width: 24px;
  height: 24px;
  border-radius: 50%;
  background: #fff;
  color: #111;
  font: 700 18px/23px "Noto Sans CJK TC", sans-serif;
}

.chat-btn {
  height: 32px;
  margin-left: 2px;
  padding: 0 9px 0 6px;
  gap: 7px;
  border-radius: 16px;
  background: #1e1e1e;
}

.bookmarks {
  height: 34px;
  padding: 0 29px 4px 12px;
  font-size: 11px;
}

.bookmark-devices {
  width: 31px;
  height: 16px;
  margin-right: 14px;
  justify-content: flex-start;
  border-right: 1px solid #666;
}

.bookmark {
  display: flex;
  align-items: center;
  gap: 6px;
  padding-right: 22px;
  white-space: nowrap;
}

.bookmark-long {
  width: 155px;
}

.bookmark-more {
  margin-left: auto;
}

/* App shell */
.app {
  flex: 1;
  display: flex;
  min-height: 0;
  margin: 0 4px;
  border-radius: 8px;
  overflow: hidden;
  background: #fff;
}

.sidebar {
  width: 100px;
  flex-shrink: 0;
  display: flex;
  flex-direction: column;
  align-items: center;
  gap: 19px;
  padding: 24px 0 9px;
  background: linear-gradient(#2c47bd, #4741c7 50%, #653cd2);
  color: #d3d3f1;
}

.side-item {
  position: relative;
  display: flex;
  flex-direction: column;
  align-items: center;
  gap: 7px;
  font-size: 12px;
  font-weight: 800;
  line-height: 18px;
  text-align: center;
}

.side-item-tight {
  gap: 4px;
}

.badge {
  position: absolute;
  top: -5px;
  left: 50%;
  margin-left: -8px;
  width: 22px;
  height: 17px;
  border-radius: 9px;
  background: #bd472e;
  color: #fff;
  font-size: 11px;
  line-height: 17px;
}

.create-icon, .workspace-icon {
  display: flex;
  align-items: center;
  justify-content: center;
  width: 30px;
  height: 30px;
  border-radius: 50%;
  background: #847bda;
}

.workspace-icon {
  width: 36px;
  height: 34px;
  border: 2px solid #aaa0e4;
  border-radius: 8px;
}

.side-divider {
  width: 60px;
  height: 2px;
  margin: 2px 0 1px;
  border: none;
  background: #a196e0;
}

.side-bottom {
  margin-top: auto;
}

.side-bottom button {
  width: 44px;
  height: 44px;
}

.help-icon {
  width: 18px;
  height: 18px;
  border-radius: 50%;
  background: #d3d3f1;
  color: #5a3fcf;
  font-size: 11px;
  font-weight: 800;
  line-height: 18px;
}

.sheet {
  flex: 1;
  min-width: 0;
  display: flex;
  flex-direction: column;
}

.sheet-header {
  display: grid;
  grid-template-columns: 1fr auto 1fr;
  align-items: center;
  padding: 9px 9px 9px 0;
}

.menu {
  display: flex;
  gap: 22px;
  padding-left: 27px;
  font-size: 15px;
}

.menu-wide {
  margin-right: 7px;
}

.sheet-title {
  display: flex;
  align-items: center;
  gap: 13px;
  padding-right: 27px;
}

.sheet-title h1 {
  margin: 0 5px 0 0;
  font-size: 19px;
  font-weight: 600;
}

.share {
  justify-self: end;
  gap: 18px;
  height: 44px;
  padding: 0 22px 0 18px;
  border-radius: 4px;
  background: #127f85;
  color: #fff;
  font-size: 15px;
  font-weight: 700;
}

/* Toolbar */
.toolbar {
  display: flex;
  align-items: center;
  flex-shrink: 0;
  height: 46px;
  padding: 0 9px 2px 6px;
  border-bottom: 1px solid #d0d0d0;
  font-size: 14px;
  font-weight: 600;
}

.toolbar svg, .rail svg {
  fill: none;
  stroke: #444;
  stroke-width: 1.6;
}

.toolbar .caret {
  stroke: none;
  color: #444;
}

.tool {
  width: 40px;
  height: 35px;
}

.tool:disabled {
  opacity: 0.3;
}

.tool-group {
  display: flex;
}

.tool-group .tool {
  width: 39px;
}

.tool-expand {
  width: 24px;
  margin-left: auto;
}

.tool-sep {
  width: 2px;
  height: 28px;
  margin: 0 11px;
  flex-shrink: 0;
  background: #e0e0e0;
}

.view-btn {
  width: 99px;
  height: 35px;
  gap: 12px;
  border-radius: 4px;
  background: #e0e0e0;
}

.filter-btn {
  width: 85px;
  gap: 4px;
}

.pick {
  display: flex;
  align-items: center;
  justify-content: space-between;
  padding: 0 12px 0 17px;
}

.pick select {
  appearance: none;
}

.pick-font {
  width: 82px;
}

.pick-size {
  width: 67px;
  font-weight: 500;
}

.caret-btn {
  width: 12px;
  height: 35px;
  margin-right: 5px;
}

.caret-btn-wide {
  margin-right: 10px;
}

/* Grid */
.workarea {
  flex: 1;
  display: flex;
  min-height: 0;
}

.grid-pane {
  flex: 1;
  min-width: 0;
  display: flex;
  flex-direction: column;
}

.grid-scroll {
  position: relative;
  flex: 1;
  min-height: 0;
  overflow: hidden;
  padding: 9px 0 0 26px;
  background: #f8f7f5;
}

.grid {
  width: 100%;
  table-layout: fixed;
  border-spacing: 0;
  font-size: 14px;
}

.grid th {
  width: 165px;
  height: 80px;
  padding: 7px 12px 0 11px;
  border-bottom: 2px solid #4a5f9e;
  background: linear-gradient(#e0e0e0, #e0e0e0) 0 4px / 1px 100% no-repeat;
  font-weight: 600;
  line-height: 17px;
  text-align: left;
  vertical-align: top;
}

.grid th.row-num {
  width: 81px;
  background: none;
}

.grid th.last {
  width: auto;
}

.grid th.selected {
  border-color: #6093d4;
  border-radius: 2px 2px 0 0;
  background: #6093d4;
  color: #fff;
}

.grid tbody {
  background: #fff;
}

.grid td {
  height: 28px;
  padding: 0;
  border-bottom: 1px solid #e2e2e2;
  border-left: 1px solid #ececec;
}

.grid tr:nth-child(odd) td {
  height: 27px;
}

.grid td.row-num {
  padding: 2px 34px 0 0;
  border-left: none;
  color: #999;
  text-align: right;
}

.grid td.selected {
  border-left: 2px solid #5f93d4;
  border-right: 2px solid #5f93d4;
  border-bottom-color: #d3dae6;
  background: #ccdbf1;
  background-clip: padding-box;
}

.grid td.before-selected {
  background: linear-gradient(to left, #deebfa, #fff 6px);
}

.grid td.after-selected {
  border-left-color: #e4eefb;
  background: linear-gradient(to right, #deebfa, #fff 6px);
}

.grid tr:first-child td.selected {
  background: #eef3fb;
}

.v-scroll {
  position: absolute;
  top: 89px;
  right: 0;
  bottom: 0;
  width: 16px;
  display: flex;
  flex-direction: column;
  align-items: center;
  padding: 6px 2px 6px 0;
  background: #fff;
}

.v-thumb {
  width: 9px;
  height: 49%;
  margin: 6px 0 auto;
  border-radius: 5px;
  background: #a0a0a0;
}

.h-scroll {
  display: flex;
  align-items: center;
  height: 15px;
  padding-right: 22px;
}

.corner {
  position: relative;
  align-self: flex-end;
  width: 99px;
  height: 19px;
  margin-right: 6px;
  flex-shrink: 0;
  background: #f8f7f5;
}

.h-thumb {
  width: 126px;
  height: 9px;
  margin: 0 auto 0 95px;
  border-radius: 5px;
  background: #a0a0a0;
}

.arrow-up, .arrow-down, .arrow-left, .arrow-right {
  border: 4px solid transparent;
}

.arrow-up {
  border-top: none;
  border-bottom: 6px solid #a0a0a0;
}

.arrow-down {
  border-bottom: none;
  border-top: 6px solid #a0a0a0;
}

.arrow-left {
  border-left: none;
  border-right: 6px solid #a0a0a0;
}

.arrow-right {
  border-right: none;
  border-left: 6px solid #a0a0a0;
}

.rail {
  width: 58px;
  flex-shrink: 0;
  padding: 3px 2px 0 0;
  border-left: 1px solid #e0e0e0;
}

.rail-list {
  display: flex;
  flex-direction: column;
  height: 632px;
}

.rail-list button {
  flex: 1;
}

.rail .glyph {
  fill: #444;
  stroke: none;
}

/* Taskbar */
.taskbar {
  position: relative;
  justify-content: center;
  height: 47px;
  margin-top: 5px;
  padding-bottom: 2px;
  background: #1c1c1c;
  line-height: 16px;
}

.weather {
  position: absolute;
  left: 20px;
  gap: 4px;
  font-size: 12px;
  text-align: left;
}

.weather small {
  font-size: 12px;
  color: #bbb;
}

.task-center {
  display: flex;
  align-items: center;
}

.task {
  position: relative;
  width: 44px;
  height: 40px;
}

.task.active {
  border-radius: 4px;
  background: #2b2b2b;
}

.task.running::after, .task.active::after {
  content: "";
  position: absolute;
  bottom: 1px;
  width: 6px;
  height: 3px;
  border-radius: 2px;
  background: #999;
}

.task.active::after {
  width: 16px;
  background: #4cc2ff;
}

.task-badge {
  position: absolute;
  top: 2px;
  right: 5px;
  width: 16px;
  height: 16px;
  border-radius: 50%;
  background: #c42b1c;
}

.task-search {
  display: flex;
  align-items: center;
  gap: 10px;
  width: 220px;
  height: 32px;
  margin: 0 2px 0 3px;
  padding: 0 14px 0 10px;
  border: 1px solid #4d4d4d;
  border-radius: 16px;
  background: #3a3a3a;
}

.task-search input {
  flex: 1;
  min-width: 0;
  font-size: 13px;
}

.task-search input::placeholder {
  color: #c8c8c8;
}

.tray {
  position: absolute;
  right: 19px;
  display: flex;
  align-items: center;
  gap: 8px;
  font-size: 12px;
  text-align: right;
}
```
